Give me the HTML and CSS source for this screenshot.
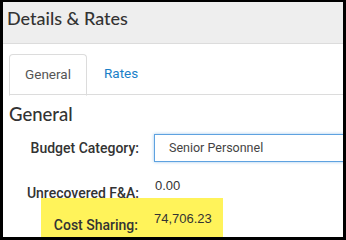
FILE: index.html
```html
<!DOCTYPE html>
<html lang="en">

<head>
    <meta charset="UTF-8">
    <meta name="viewport" content="width=device-width, initial-scale=1.0">
    <title>Details &amp; Rates</title>
    <link rel="stylesheet" href="styles.css">
</head>

<body>
    <div class="frame">
        <div class="header">Details &amp; Rates</div>
        <div class="content">
            <ul class="tabs">
                <li class="tab active">General</li>
                <li class="tab">Rates</li>
            </ul>
            <h2 class="section">General</h2>
            <div class="row">
                <label class="label">Budget Category:</label>
                <div class="select">Senior Personnel</div>
            </div>
            <div class="row plain">
                <label class="label">Unrecovered F&amp;A:</label>
                <span class="value">0.00</span>
            </div>
            <div class="row plain highlight">
                <label class="label">Cost Sharing:</label>
                <span class="value">74,706.23</span>
            </div>
        </div>
    </div>
</body>

</html>
```

FILE: styles.css
```css
* {
    margin: 0;
    padding: 0;
    box-sizing: border-box;
}

body {
    font-family: "Liberation Sans", Arial, sans-serif;
    color: #333;
}

.frame {
    width: 346px;
    height: 240px;
    border: 3px solid #000;
    border-top-width: 2px;
    overflow: hidden;
    background: #fff;
}

.header {
    height: 42px;
    background: #eeeeee;
    border-bottom: 1px solid #dcdcdc;
    font-family: Lato, sans-serif;
    font-size: 18px;
    font-weight: 500;
    color: #333;
    padding: 5px 0 0 4px;
}

.content {
    padding: 10px 0 0 6px;
}

.tabs {
    display: flex;
    list-style: none;
    border-bottom: 1px solid #dcdcdc;
    height: 41px;
}

.tab {
    height: 41px;
    padding: 0 17px;
    font-family: Roboto, sans-serif;
    font-size: 13.5px;
    line-height: 38px;
    text-align: center;
    color: #1a7fc8;
}

.tab.active {
    width: 78px;
    padding: 0;
    color: #555;
    border: 1px solid #dcdcdc;
    border-bottom-color: #fff;
    border-radius: 4px 4px 0 0;
    height: 42px;
}

.section {
    font-family: Lato, sans-serif;
    font-size: 18.5px;
    font-weight: 500;
    color: #333;
    margin-top: 8px;
}

.row {
    display: flex;
    align-items: center;
    margin-top: 9px;
}

.label {
    width: 130px;
    flex-shrink: 0;
    text-align: right;
    font-family: Roboto, sans-serif;
    font-weight: 500;
    font-size: 14px;
    color: #333;
}

.select {
    margin-left: 15px;
    width: 240px;
    flex-shrink: 0;
    height: 28px;
    border: 1px solid #5ea2e0;
    box-shadow: 0 0 3px rgba(94, 162, 224, .6);
    font-family: Roboto, sans-serif;
    font-size: 12.5px;
    color: #444;
    line-height: 26px;
    padding-left: 14px;
}

.plain {
    align-items: flex-start;
    height: 20px;
    margin-top: 16px;
}

.plain .label {
    padding-top: 7px;
}

.value {
    margin-left: 16px;
    font-size: 13px;
    color: #333;
}

.highlight {
    margin: 0 0 0 32px;
    width: 182px;
    height: 40px;
    background: #fff35a;
}

.highlight .label {
    width: 97px;
    padding-top: 19px;
}

.highlight .value {
    padding-top: 13px;
}
```
